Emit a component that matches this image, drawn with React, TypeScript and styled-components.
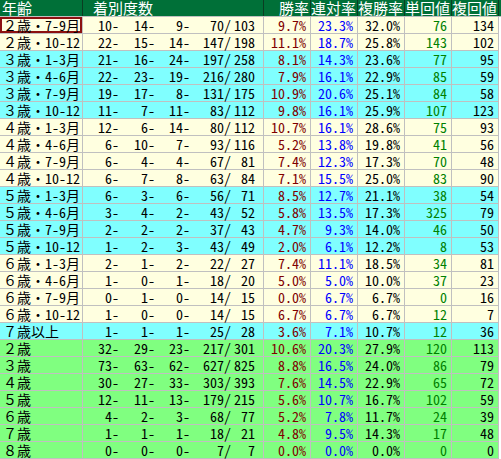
import React from "react";
import styled, { createGlobalStyle } from "styled-components";

const Global = createGlobalStyle`
  html, body { margin: 0; padding: 0; background: #ffffff; }
  body { font-family: "Noto Sans Mono CJK JP", "Noto Sans CJK JP", monospace; }
`;

type Tone = "y" | "c" | "g";
const toneBg: Record<Tone, string> = { y: "#ffffe0", c: "#80ffff", g: "#80ff80" };

const COLS = "82px 180px 46px 46px 46px 46px 46px";

const Table = styled.div`
  display: flex;
  flex-direction: column;
  width: 501px;
  height: 459px;
  background: #ffffff;
  overflow: hidden;
`;

const HeaderRow = styled.div`
  display: grid;
  grid-template-columns: ${COLS} 1fr;
  column-gap: 1px;
  height: 16px;
  flex: none;
  background: #0b3d22;
  border-bottom: 1px solid #c0c0c0;
`;

const HeadCell = styled.div<{ $align?: "left" | "right"; $pad?: number }>`
  background: #007038;
  color: #ffffff;
  font-size: 15px;
  line-height: 16px;
  white-space: nowrap;
  text-align: ${(p) => p.$align ?? "right"};
  padding: ${(p) => (p.$align === "left" ? `0 0 0 ${p.$pad ?? 2}px` : "0 1px 0 0")};
`;

const Body = styled.div`
  display: flex;
  flex-direction: column;
  gap: 1px;
  width: 499px;
  background: #c0c0c0;
  padding-bottom: 1px;
`;

const Row = styled.div`
  display: grid;
  grid-template-columns: ${COLS};
  column-gap: 1px;
  padding-right: 1px;
  height: 16px;
  flex: none;
  background: #c0c0c0;
`;

const Cell = styled.div<{ $tone: Tone; $color?: string; $selected?: boolean }>`
  background: ${(p) => toneBg[p.$tone]};
  color: ${(p) => p.$color ?? "#000000"};
  font-size: 14px;
  line-height: 16px;
  white-space: nowrap;
  text-align: right;
  padding-right: 4px;
  box-shadow: ${(p) => (p.$selected ? "inset 0 0 0 2px #8c1010" : "none")};
`;

const LabelCell = styled(Cell)`
  text-align: left;
  padding: 0 0 0 3px;
`;

const CountCell = styled(Cell)`
  display: flex;
  padding-right: 0;
`;

const Part = styled.span<{ $w: number }>`
  display: block;
  width: ${(p) => p.$w}px;
  text-align: right;
  flex: none;
`;

type R = [string, number, number, number, number, number, string, string, string, number, number, Tone];

const rows: R[] = [
  ["２歳・7-9月", 10, 14, 9, 70, 103, "9.7", "23.3", "32.0", 76, 134, "y"],
  ["２歳・10-12", 22, 15, 14, 147, 198, "11.1", "18.7", "25.8", 143, 102, "y"],
  ["３歳・1-3月", 21, 16, 24, 197, 258, "8.1", "14.3", "23.6", 77, 95, "c"],
  ["３歳・4-6月", 22, 23, 19, 216, 280, "7.9", "16.1", "22.9", 85, 59, "c"],
  ["３歳・7-9月", 19, 17, 8, 131, 175, "10.9", "20.6", "25.1", 84, 58, "c"],
  ["３歳・10-12", 11, 7, 11, 83, 112, "9.8", "16.1", "25.9", 107, 123, "c"],
  ["４歳・1-3月", 12, 6, 14, 80, 112, "10.7", "16.1", "28.6", 75, 93, "y"],
  ["４歳・4-6月", 6, 10, 7, 93, 116, "5.2", "13.8", "19.8", 41, 56, "y"],
  ["４歳・7-9月", 6, 4, 4, 67, 81, "7.4", "12.3", "17.3", 70, 48, "y"],
  ["４歳・10-12", 6, 7, 8, 63, 84, "7.1", "15.5", "25.0", 83, 90, "y"],
  ["５歳・1-3月", 6, 3, 6, 56, 71, "8.5", "12.7", "21.1", 38, 54, "c"],
  ["５歳・4-6月", 3, 4, 2, 43, 52, "5.8", "13.5", "17.3", 325, 79, "c"],
  ["５歳・7-9月", 2, 2, 2, 37, 43, "4.7", "9.3", "14.0", 46, 50, "c"],
  ["５歳・10-12", 1, 2, 3, 43, 49, "2.0", "6.1", "12.2", 8, 53, "c"],
  ["６歳・1-3月", 2, 1, 2, 22, 27, "7.4", "11.1", "18.5", 34, 81, "y"],
  ["６歳・4-6月", 1, 0, 1, 18, 20, "5.0", "5.0", "10.0", 37, 23, "y"],
  ["６歳・7-9月", 0, 1, 0, 14, 15, "0.0", "6.7", "6.7", 0, 16, "y"],
  ["６歳・10-12", 1, 0, 0, 14, 15, "6.7", "6.7", "6.7", 12, 7, "y"],
  ["７歳以上", 1, 1, 1, 25, 28, "3.6", "7.1", "10.7", 12, 36, "c"],
  ["２歳", 32, 29, 23, 217, 301, "10.6", "20.3", "27.9", 120, 113, "g"],
  ["３歳", 73, 63, 62, 627, 825, "8.8", "16.5", "24.0", 86, 79, "g"],
  ["４歳", 30, 27, 33, 303, 393, "7.6", "14.5", "22.9", 65, 72, "g"],
  ["５歳", 12, 11, 13, 179, 215, "5.6", "10.7", "16.7", 102, 59, "g"],
  ["６歳", 4, 2, 3, 68, 77, "5.2", "7.8", "11.7", 24, 39, "g"],
  ["７歳", 1, 1, 1, 18, 21, "4.8", "9.5", "14.3", 17, 48, "g"],
  ["８歳", 0, 0, 0, 7, 7, "0.0", "0.0", "0.0", 0, 0, "g"],
];

export default function App() {
  return (
    <>
      <Global />
      <Table>
        <HeaderRow>
          <HeadCell $align="left" $pad={2}>年齢</HeadCell>
          <HeadCell $align="left" $pad={10}>着別度数</HeadCell>
          <HeadCell>勝率</HeadCell>
          <HeadCell>連対率</HeadCell>
          <HeadCell>複勝率</HeadCell>
          <HeadCell>単回値</HeadCell>
          <HeadCell>複回値</HeadCell>
          <HeadCell />
        </HeaderRow>
        <Body>
          {rows.map((r, i) => {
            const [label, a, b, c, d, total, win, ren, fuku, tan, fk, tone] = r;
            return (
              <Row key={i}>
                <LabelCell $tone={tone} $selected={i === 0}>{label}</LabelCell>
                <CountCell $tone={tone}>
                  <Part $w={36}>{a}-</Part>
                  <Part $w={36}>{b}-</Part>
                  <Part $w={35}>{c}-</Part>
                  <Part $w={41}>{d}/</Part>
                  <Part $w={24}>{total}</Part>
                </CountCell>
                <Cell $tone={tone} $color="#800000">{win}%</Cell>
                <Cell $tone={tone} $color="#0000ff">{ren}%</Cell>
                <Cell $tone={tone}>{fuku}%</Cell>
                <Cell $tone={tone} $color="#008000">{tan}</Cell>
                <Cell $tone={tone}>{fk}</Cell>
              </Row>
            );
          })}
        </Body>
      </Table>
    </>
  );
}
